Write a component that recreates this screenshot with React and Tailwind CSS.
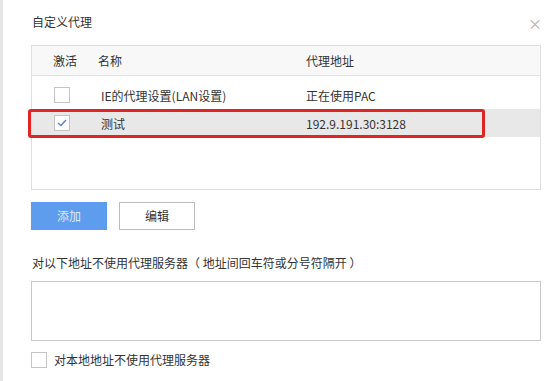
import React, { useState } from 'react';

const font = { fontFamily: '"Noto Sans CJK SC", "Liberation Sans", sans-serif' };

function Check({ checked, onChange }) {
  return (
    <button
      onClick={onChange}
      className="w-[16px] h-[16px] border border-[#c4c4c4] bg-white flex items-center justify-center shrink-0"
    >
      {checked && (
        <svg width="10" height="8" viewBox="0 0 10 8">
          <polyline points="1,4 4,6.5 9,1" fill="none" stroke="#5b7fd0" strokeWidth="1.4" />
        </svg>
      )}
    </button>
  );
}

export default function App() {
  const [rows, setRows] = useState([
    { id: 1, active: false, name: 'IE的代理设置(LAN设置)', addr: '正在使用PAC' },
    { id: 2, active: true, name: '测试', addr: '192.9.191.30:3128' },
  ]);
  const [local, setLocal] = useState(false);
  const selected = 2;

  const toggle = id => setRows(rows.map(r => (r.id === id ? { ...r, active: !r.active } : r)));

  return (
    <div style={font} className="relative w-[559px] h-[381px] bg-white border-l-[3px] border-[#e6e6e6] text-[12px] text-[#333] leading-[16px] overflow-hidden">
      <div className="pt-[14px] pl-[29px]">自定义代理</div>
      <span className="absolute top-[15px] right-[17px] text-[14px] text-[#b0b0b0]">×</span>

      <div className="mt-[15px] ml-[28px] w-[510px] h-[145px] border border-[#dedede]">
        <div className="flex items-center h-[30px] bg-[#f8f8f8] border-b border-[#e2e2e2]">
          <div className="w-[66px] pl-[21px]">激活</div>
          <div className="w-[208px]">名称</div>
          <div>代理地址</div>
        </div>
        <div className="pt-[5px]">
          {rows.map(r => (
            <div key={r.id} className={'relative flex items-center h-[28px] ' + (r.id === selected ? 'bg-[#e8e8e8]' : '')}>
              <div className="w-[66px] pl-[22px]">
                <Check checked={r.active} onChange={() => toggle(r.id)} />
              </div>
              <div className="w-[208px] pl-[3px] pt-[2px]">{r.name}</div>
              <div className="pt-[2px]">{r.addr}</div>
              {r.id === selected && (
                <div className="absolute left-[-4px] top-[0px] w-[457px] h-[29px] border-[3px] border-[#e02323] rounded-[3px]" />
              )}
            </div>
          ))}
        </div>
      </div>

      <div className="flex gap-[12px] mt-[12px] ml-[28px]">
        <button className="w-[76px] h-[28px] bg-[#5e9ded] text-[#dce9fb]">添加</button>
        <button className="w-[76px] h-[28px] bg-white border border-[#bdbdbd] text-[#333]">编辑</button>
      </div>

      <div className="mt-[25px] ml-[29px]">对以下地址不使用代理服务器（ 地址间回车符或分号符隔开 ）</div>

      <textarea className="block mt-[10px] ml-[28px] w-[510px] h-[60px] border border-[#c9c9c9] resize-none outline-none" />

      <div className="flex items-center mt-[11px] ml-[28px] gap-[7px]">
        <Check checked={local} onChange={() => setLocal(!local)} />
        <span>对本地地址不使用代理服务器</span>
      </div>
    </div>
  );
}
